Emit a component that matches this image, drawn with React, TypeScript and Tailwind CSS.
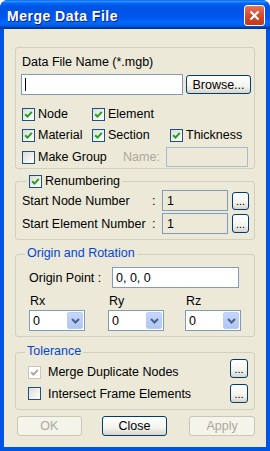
import React from "react";

function Check({ checked = false, disabled = false }: { checked?: boolean; disabled?: boolean }) {
  return (
    <span
      className={`flex h-[13px] w-[13px] shrink-0 items-center justify-center border ${
        disabled
          ? "border-[#CAC8BB] bg-white"
          : "border-[#1C5180] bg-[linear-gradient(135deg,#DCDCD7,#FFFFFF)]"
      }`}
    >
      {checked && (
        <svg width="9" height="9" viewBox="0 0 9 9">
          <path
            d="M1.2 4.2 L3.5 6.6 L7.8 1.8"
            fill="none"
            stroke={disabled ? "#ACA899" : "#21A121"}
            strokeWidth="2"
          />
        </svg>
      )}
    </span>
  );
}

function CheckItem({ label, checked, disabled, className = "" }: { label: string; checked?: boolean; disabled?: boolean; className?: string }) {
  return (
    <span className={`flex items-center gap-[3px] ${className}`}>
      <Check checked={checked} disabled={disabled} />
      <span>{label}</span>
    </span>
  );
}

function Button({ label, disabled = false, className = "" }: { label: string; disabled?: boolean; className?: string }) {
  return (
    <span
      className={`flex items-center justify-center rounded-[3px] border ${
        disabled
          ? "border-[#C9C7BA] bg-[#F5F4EA] text-[#ACA899]"
          : "border-[#003C74] bg-[linear-gradient(180deg,#FFFFFF,#F3F3EF_60%,#D8D4C8)] text-black"
      } ${className}`}
    >
      {label}
    </span>
  );
}

function Dots({ className = "" }: { className?: string }) {
  return (
    <span
      className={`flex shrink-0 items-end justify-center rounded-[3px] border border-[#003C74] bg-[linear-gradient(180deg,#FFFFFF,#F3F3EF_60%,#D8D4C8)] pb-[2px] text-[11px] leading-[11px] ${className}`}
    >
      ...
    </span>
  );
}

function Combo() {
  return (
    <span className="flex h-[21px] w-[56px] items-center border border-[#7F9DB9] bg-white p-[1px]">
      <span className="flex-1 pl-[2px]">0</span>
      <span className="flex h-full w-[16px] items-center justify-center rounded-[2px] border border-[#B9CDF7] bg-[linear-gradient(180deg,#C6D6FC,#B0C6F5)]">
        <svg width="9" height="6" viewBox="0 0 9 6">
          <path d="M1 1 L4.5 4.5 L8 1" fill="none" stroke="#4D6185" strokeWidth="2" />
        </svg>
      </span>
    </span>
  );
}

export default function App() {
  return (
    <div className="flex h-[451px] w-[270px] flex-col overflow-hidden rounded-t-[8px] bg-[#0054E3] font-['Liberation_Sans',Arial,sans-serif] text-[12.5px] leading-[14px] text-black">
      <div className="flex h-[29px] shrink-0 items-start justify-between bg-[linear-gradient(180deg,#0058EE_0%,#3593FF_4%,#288EFF_6%,#127DFF_8%,#036FFC_10%,#0262EE_14%,#0057E5_20%,#0054E3_24%,#0055EB_56%,#005BF5_66%,#026AFE_76%,#0062EF_86%,#0052D6_92%,#0040AB_94%,#003092_100%)] pl-[7px] pr-[5px] pt-[5px]">
        <span className="mt-[3px] text-[14px] font-bold leading-[17px] tracking-[0.5px] text-white [text-shadow:1px_1px_0_#0A1E8C]">
          Merge Data File
        </span>
        <span className="flex h-[21px] w-[21px] items-center justify-center rounded-[3px] border border-white bg-[linear-gradient(180deg,#E97458,#D54A2A_50%,#C2371A)]">
          <svg width="11" height="11" viewBox="0 0 11 11">
            <path d="M1.5 1.5 L9.5 9.5 M9.5 1.5 L1.5 9.5" stroke="#FFFFFF" strokeWidth="2.2" />
          </svg>
        </span>
      </div>

      <div className="mx-[4px] mb-[4px] flex flex-1 flex-col bg-[#ECE9D8] px-[11px] pt-[18px]">
        {/* file + element types */}
        <div className="flex flex-col rounded-[3px] border border-[#D0D0BF] pb-[1px] pl-[6px] pt-[7px]">
          <span>Data File Name (*.mgb)</span>
          <div className="mt-[5px] flex items-center">
            <span className="-ml-[1px] flex h-[21px] w-[162px] items-center border border-[#7F9DB9] bg-white pl-[3px]">
              <span className="h-[13px] w-[1px] bg-black" />
            </span>
            <Button label="Browse..." className="ml-[3px] h-[19px] w-[65px]" />
          </div>
          <div className="mt-[12px] flex">
            <CheckItem label="Node" checked className="w-[70px]" />
            <CheckItem label="Element" checked />
          </div>
          <div className="mt-[7px] flex">
            <CheckItem label="Material" checked className="w-[70px]" />
            <CheckItem label="Section" checked className="w-[78px]" />
            <CheckItem label="Thickness" checked />
          </div>
          <div className="mt-[5px] flex h-[20px] items-center">
            <CheckItem label="Make Group" className="w-[101px]" />
            <span className="w-[43px] text-[#ACA899]">Name:</span>
            <span className="h-[20px] w-[82px] border border-[#A5BAD3] bg-[#ECE9D8]" />
          </div>
        </div>

        {/* renumbering */}
        <fieldset className="mt-[5px] rounded-[3px] border border-[#D0D0BF] pb-[5px] pt-[2px]">
          <legend className="ml-[11px] px-[2px]">
            <CheckItem label="Renumbering" checked />
          </legend>
          {["Start Node Number", "Start Element Number"].map((label, i) => (
            <div key={label} className={`flex h-[21px] items-center pl-[6px] ${i ? "mt-[2px]" : ""}`}>
              <span className="w-[130px]">{label}</span>
              <span className="w-[10px]">:</span>
              <span className="flex h-[21px] w-[66px] items-center border border-[#7F9DB9] bg-[#ECE9D8] pl-[4px]">1</span>
              <Dots className={`ml-[4px] w-[17px] ${i ? "h-[19px]" : "h-[18px]"}`} />
            </div>
          ))}
        </fieldset>

        {/* origin and rotation */}
        <fieldset className="mt-[7px] rounded-[3px] border border-[#D0D0BF] pb-[5px] pl-[13px] pt-[6px]">
          <legend className="ml-[-4px] px-[2px] pb-[2px] leading-[12px] text-[#0046D5]">Origin and Rotation</legend>
          <div className="flex items-center">
            <span className="w-[83px]">Origin Point :</span>
            <span className="flex h-[21px] w-[127px] items-center border border-[#7F9DB9] bg-white pl-[3px]">0, 0, 0</span>
          </div>
          <div className="mt-[6px] flex">
            {["Rx", "Ry", "Rz"].map((r, i) => (
              <div key={r} className={`flex flex-col ${i === 1 ? "ml-[23px]" : i === 2 ? "ml-[21px]" : ""}`}>
                <span className="ml-[1px]">{r}</span>
                <span className="mt-[2px]">
                  <Combo />
                </span>
              </div>
            ))}
          </div>
        </fieldset>

        {/* tolerance */}
        <fieldset className="mt-[8px] rounded-[3px] border border-[#D0D0BF] pb-[6px] pl-[12px] pr-[6px]">
          <legend className="ml-[-3px] px-[2px] pb-[2px] leading-[12px] text-[#0046D5]">Tolerance</legend>
          <div className="flex items-start">
            <span className="mt-[6px] flex items-center gap-[7px]">
              <Check checked disabled />
              <span>Merge Duplicate Nodes</span>
            </span>
            <Dots className="ml-auto h-[19px] w-[18px]" />
          </div>
          <div className="mt-[5px] flex h-[19px] items-center">
            <span className="flex items-center gap-[7px]">
              <Check />
              <span>Intersect Frame Elements</span>
            </span>
            <Dots className="ml-auto h-[19px] w-[18px]" />
          </div>
        </fieldset>

        <div className="mt-[6px] flex">
          <Button label="OK" disabled className="ml-[2px] h-[20px] w-[65px]" />
          <Button label="Close" className="ml-[20px] h-[20px] w-[66px]" />
          <Button label="Apply" disabled className="ml-[22px] h-[20px] w-[66px]" />
        </div>
      </div>
    </div>
  );
}
